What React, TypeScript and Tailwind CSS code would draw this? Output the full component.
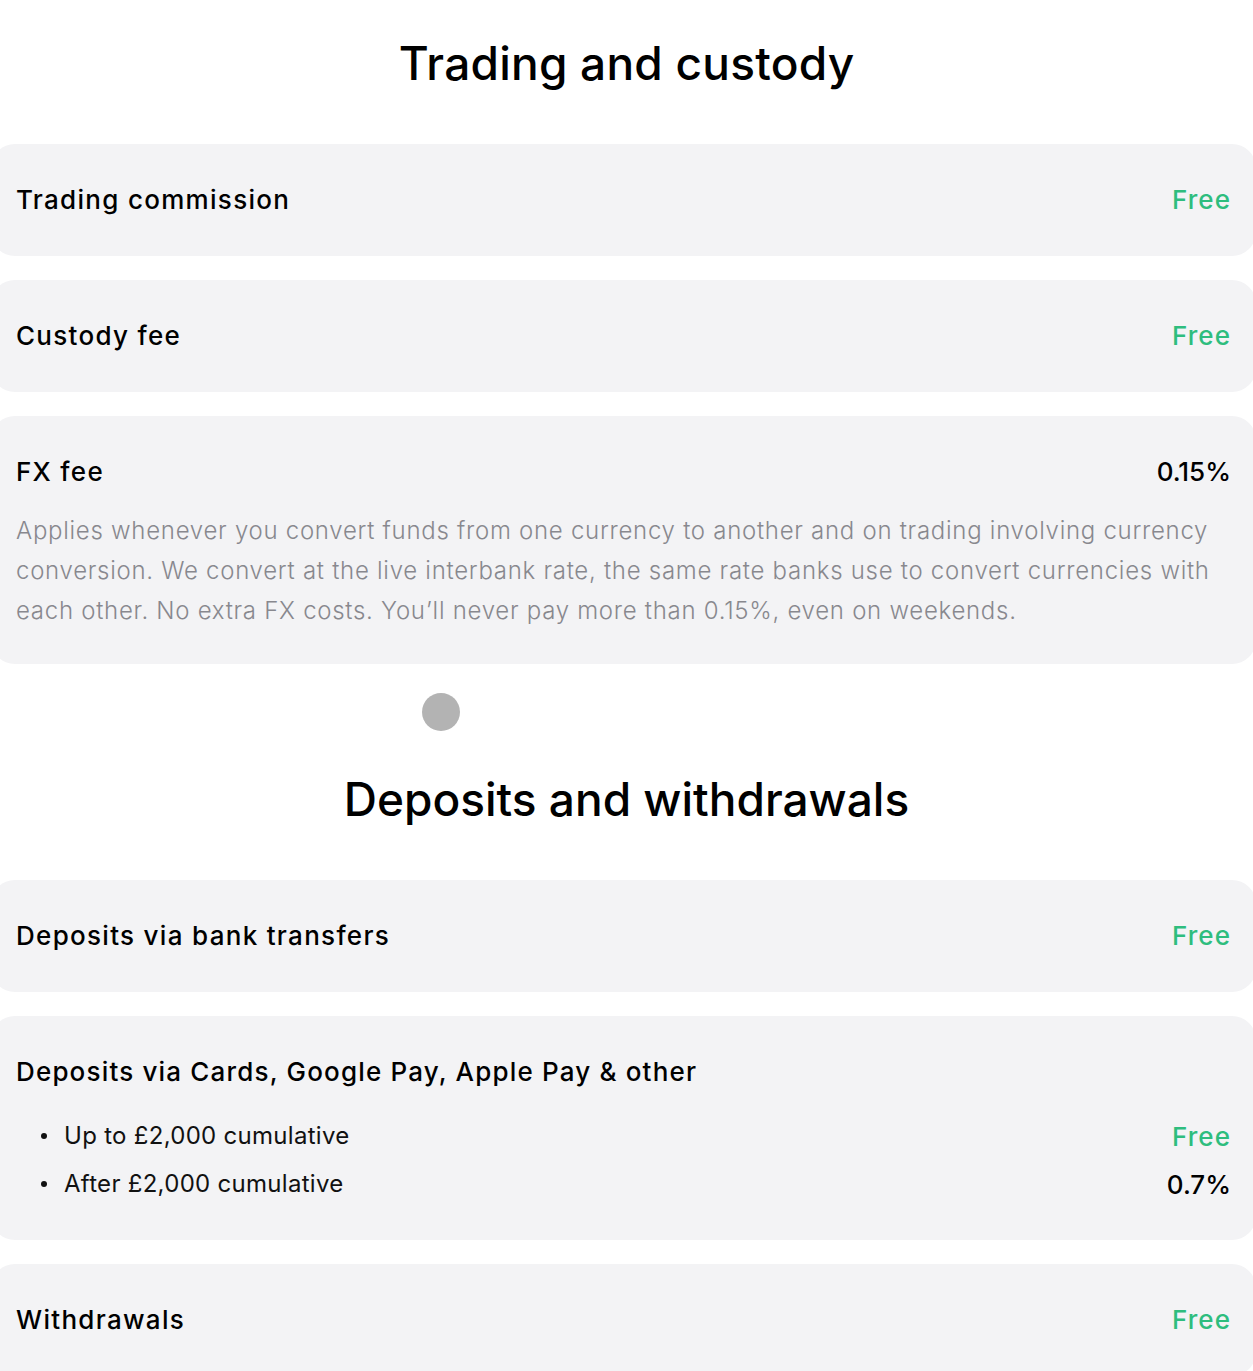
import React from 'react';

const font = { fontFamily: 'Inter, "Noto Sans", sans-serif' };

function Row({ label, value, free }: { label: string; value: string; free?: boolean }) {
  return (
    <div className="ml-[-9px] mr-[-3px] rounded-[24px] bg-[#f3f3f5] px-[25px] py-10">
      <div className="flex items-center justify-between text-[26px] font-medium leading-8 text-black">
        <span className="tracking-[0.05em]">{label}</span>
        <span className={free ? 'tracking-[0.04em] text-[#2ebd7e]' : 'text-black'}>{value}</span>
      </div>
    </div>
  );
}

export default function App() {
  return (
    <div className="min-h-[1371px] overflow-hidden bg-white" style={font}>
      <div className="flex flex-col">
        <h2 className="mt-[35px] text-center text-[46px] font-medium leading-[56px] tracking-[0.005em] text-black">Trading and custody</h2>

        <div className="mt-[53px] flex flex-col gap-6">
          <Row label="Trading commission" value="Free" free />
          <Row label="Custody fee" value="Free" free />

          <div className="ml-[-9px] mr-[-3px] rounded-[24px] bg-[#f3f3f5] px-[25px] pt-10 pb-[33px]">
            <div className="flex items-center justify-between text-[26px] font-medium leading-8 text-black">
              <span className="tracking-[0.05em]">FX fee</span>
              <span>0.15%</span>
            </div>
            <p className="mt-[23px] text-[24px] font-light leading-10 tracking-[0.03em] text-[#88888e]">
              <span className="block whitespace-nowrap">Applies whenever you convert funds from one currency to another and on trading involving currency</span>
              <span className="block whitespace-nowrap">conversion. We convert at the live interbank rate, the same rate banks use to convert currencies with</span>
              <span className="block whitespace-nowrap">each other. No extra FX costs. You’ll never pay more than 0.15%, even on weekends.</span>
            </p>
          </div>
        </div>

        <div className="ml-[422px] mt-[29px] h-[38px] w-[38px] rounded-full bg-[#b3b3b3]" />

        <h2 className="mt-10 text-center text-[46px] font-medium leading-[56px] text-black">Deposits and withdrawals</h2>

        <div className="mt-[53px] flex flex-col gap-6">
          <Row label="Deposits via bank transfers" value="Free" free />

          <div className="ml-[-9px] mr-[-3px] rounded-[24px] bg-[#f3f3f5] px-[25px] pt-10 pb-8">
            <div className="text-[26px] font-medium leading-8 tracking-[0.045em] text-black">Deposits via Cards, Google Pay, Apple Pay &amp; other</div>
            <div className="mt-6 flex flex-col">
              <div className="flex h-12 items-center justify-between">
                <div className="flex items-center text-[24px] leading-8 tracking-[0.012em] text-[#111]">
                  <span className="ml-[25px] mr-[17px] h-[6px] w-[6px] rounded-full bg-[#111]" />
                  <span>Up to £2,000 cumulative</span>
                </div>
                <span className="text-[26px] font-medium tracking-[0.04em] text-[#2ebd7e]">Free</span>
              </div>
              <div className="flex h-12 items-center justify-between">
                <div className="flex items-center text-[24px] leading-8 tracking-[0.012em] text-[#111]">
                  <span className="ml-[25px] mr-[17px] h-[6px] w-[6px] rounded-full bg-[#111]" />
                  <span>After £2,000 cumulative</span>
                </div>
                <span className="text-[26px] font-medium text-black">0.7%</span>
              </div>
            </div>
          </div>

          <Row label="Withdrawals" value="Free" free />
        </div>
      </div>
    </div>
  );
}
